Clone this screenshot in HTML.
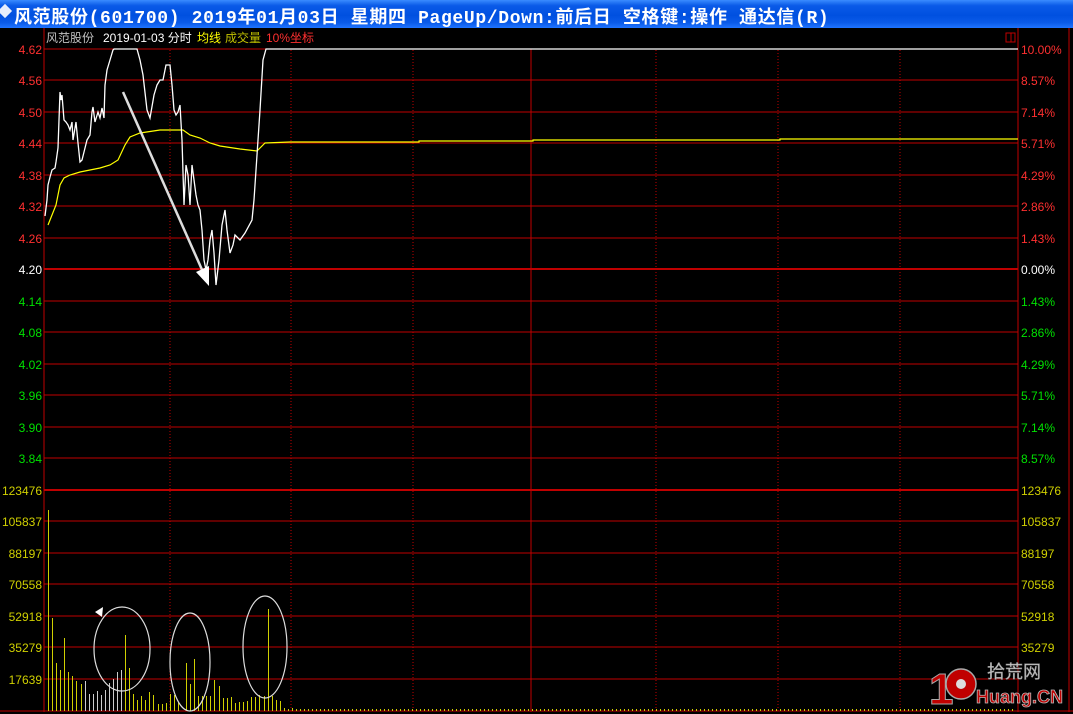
<!DOCTYPE html>
<html><head><meta charset="utf-8"><style>
html,body{margin:0;padding:0;background:#000;width:1073px;height:714px;overflow:hidden}
#t{position:absolute;left:0;top:0;width:1073px;height:28px;background:linear-gradient(#3a8cff 0,#0a5ae8 20%,#0050e0 55%,#0a5ae8 80%,#1f74ff 100%);}
#t span{position:absolute;left:14px;top:3px;color:#fff;font:bold 18px "Liberation Mono","Noto Sans CJK SC",monospace;white-space:nowrap;letter-spacing:0.65px}
svg{position:absolute;left:0;top:0}
text{font-family:"Liberation Sans","Noto Sans CJK SC",sans-serif;font-size:12px}
.g line{shape-rendering:crispEdges}
</style></head><body>
<div id="t"><span>风范股份(601700) 2019年01月03日 星期四 PageUp/Down:前后日 空格键:操作 通达信(R)</span></div>
<svg width="1073" height="714" id="s">
<rect x="0" y="6" width="10" height="10" fill="#fff" transform="rotate(45 5 11)" opacity="0.9"/>
<g class="g" stroke="#c00000" stroke-width="1">
<line x1="44" y1="28" x2="44" y2="712"/>
<line x1="1018" y1="28" x2="1018" y2="712"/>
<line x1="1069" y1="28" x2="1069" y2="712"/>
<line x1="531" y1="49" x2="531" y2="712"/>
<g stroke-dasharray="1,2">
<line x1="170" y1="50" x2="170" y2="712"/><line x1="291" y1="50" x2="291" y2="712"/><line x1="413" y1="50" x2="413" y2="712"/><line x1="656" y1="50" x2="656" y2="712"/><line x1="778" y1="50" x2="778" y2="712"/><line x1="900" y1="50" x2="900" y2="712"/>
</g>
<line x1="44" y1="49" x2="1018" y2="49"/><line x1="44" y1="80" x2="1018" y2="80"/><line x1="44" y1="112" x2="1018" y2="112"/><line x1="44" y1="143" x2="1018" y2="143"/><line x1="44" y1="175" x2="1018" y2="175"/><line x1="44" y1="206" x2="1018" y2="206"/><line x1="44" y1="238" x2="1018" y2="238"/>
<line x1="44" y1="269" x2="1018" y2="269" stroke-width="2"/>
<line x1="44" y1="301" x2="1018" y2="301"/><line x1="44" y1="332" x2="1018" y2="332"/><line x1="44" y1="364" x2="1018" y2="364"/><line x1="44" y1="395" x2="1018" y2="395"/><line x1="44" y1="427" x2="1018" y2="427"/><line x1="44" y1="458" x2="1018" y2="458"/>
<line x1="44" y1="490" x2="1018" y2="490" stroke-width="2"/>
<line x1="44" y1="521" x2="1018" y2="521"/><line x1="44" y1="553" x2="1018" y2="553"/><line x1="44" y1="584" x2="1018" y2="584"/><line x1="44" y1="616" x2="1018" y2="616"/><line x1="44" y1="647" x2="1018" y2="647"/><line x1="44" y1="679" x2="1018" y2="679"/>
<line x1="0" y1="711" x2="1073" y2="711"/>
</g>
<rect x="1006" y="33" width="9" height="9" fill="none" stroke="#c00000"/><line x1="1011" y1="33" x2="1011" y2="42" stroke="#c00000"/>
<text x="46" y="42" fill="#c0c0c0">风范股份</text>
<text x="103" y="42" fill="#fff">2019-01-03 分时</text>
<text x="197" y="42" fill="#ffff00">均线</text>
<text x="225" y="42" fill="#c0c000">成交量</text>
<text x="266" y="42" fill="#ff3030">10%坐标</text>
<g text-anchor="end">
<text x="42" y="54" fill="#ff3030">4.62</text><text x="42" y="85" fill="#ff3030">4.56</text><text x="42" y="117" fill="#ff3030">4.50</text><text x="42" y="148" fill="#ff3030">4.44</text><text x="42" y="180" fill="#ff3030">4.38</text><text x="42" y="211" fill="#ff3030">4.32</text><text x="42" y="243" fill="#ff3030">4.26</text>
<text x="42" y="274" fill="#fff">4.20</text>
<text x="42" y="306" fill="#00e000">4.14</text><text x="42" y="337" fill="#00e000">4.08</text><text x="42" y="369" fill="#00e000">4.02</text><text x="42" y="400" fill="#00e000">3.96</text><text x="42" y="432" fill="#00e000">3.90</text><text x="42" y="463" fill="#00e000">3.84</text>
<g fill="#d0d000"><text x="42" y="495">123476</text><text x="42" y="526">105837</text><text x="42" y="558">88197</text><text x="42" y="589">70558</text><text x="42" y="621">52918</text><text x="42" y="652">35279</text><text x="42" y="684">17639</text></g>
</g>
<g>
<text x="1021" y="54" fill="#ff3030">10.00%</text><text x="1021" y="85" fill="#ff3030">8.57%</text><text x="1021" y="117" fill="#ff3030">7.14%</text><text x="1021" y="148" fill="#ff3030">5.71%</text><text x="1021" y="180" fill="#ff3030">4.29%</text><text x="1021" y="211" fill="#ff3030">2.86%</text><text x="1021" y="243" fill="#ff3030">1.43%</text>
<text x="1021" y="274" fill="#fff">0.00%</text>
<text x="1021" y="306" fill="#00e000">1.43%</text><text x="1021" y="337" fill="#00e000">2.86%</text><text x="1021" y="369" fill="#00e000">4.29%</text><text x="1021" y="400" fill="#00e000">5.71%</text><text x="1021" y="432" fill="#00e000">7.14%</text><text x="1021" y="463" fill="#00e000">8.57%</text>
<g fill="#d0d000"><text x="1021" y="495">123476</text><text x="1021" y="526">105837</text><text x="1021" y="558">88197</text><text x="1021" y="589">70558</text><text x="1021" y="621">52918</text><text x="1021" y="652">35279</text></g>
</g>
<polyline fill="none" stroke="#ffff00" stroke-width="1.2" points="48,225 52,215 56,205 60,185 64,178 70,175 80,172 100,168 110,165 118,160 125,145 130,137 140,133 160,130 170,130 183,130 190,135 200,138 210,143 220,146 240,149 257,151 265,143 290,142 419,142 419,141 533,141 533,140 780,140 780,139 1018,139"/>
<polyline fill="none" stroke="#fff" stroke-width="1.3" points="45,216 47,200 48,185 50,177 52,170 55,168 56,162 58,148 60,92 61,100 62,95 64,120 66,122 68,125 70,130 72,122 73,140 76,122 78,143 80,162 82,160 84,152 87,140 90,135 92,112 93,107 95,122 98,112 100,118 102,108 104,118 105,85 107,70 110,60 113,50 114,49 137,49 140,60 143,75 147,110 150,118 154,95 157,85 160,80 163,80 166,65 170,65 172,85 174,110 176,115 178,112 180,105 182,140 184,205 186,165 188,175 190,205 192,165 194,180 196,195 198,205 200,210 202,230 204,260 206,270 208,260 210,240 212,230 214,253 216,285 219,260 222,225 225,210 227,230 230,253 233,245 235,235 240,240 245,233 252,220 254,200 256,170 258,140 260,110 263,60 266,49 1018,49"/>
<line x1="123" y1="92" x2="203" y2="272" stroke="#ddd" stroke-width="2.5"/>
<polygon points="209,286 196,272 209,266" fill="#fff"/>
<g id="vb" stroke="#d0d000" stroke-width="1"></g>
<g fill="none" stroke="#ddd" stroke-width="1.2">
<ellipse cx="122" cy="649" rx="28" ry="42"/><ellipse cx="190" cy="662" rx="20" ry="49"/><ellipse cx="265" cy="647" rx="22" ry="51"/>
</g>
<polygon points="95,612 103,607 102,617" fill="#fff"/>
<g font-family="Liberation Sans,sans-serif">
<text x="929" y="704" font-weight="bold" fill="#c00000" stroke="#aaa" stroke-width="1" style="font-size:44px">1</text>
<circle cx="961" cy="684" r="15" fill="#c00000" stroke="#aaa" stroke-width="1.5"/><circle cx="961" cy="684" r="5" fill="#ddd"/>
<text x="987" y="678" fill="#c8c8c8" stroke="#888" stroke-width="0.5" style="font-size:18px">拾荒网</text>
<text x="976" y="703" font-weight="bold" fill="#c00000" stroke="#bbb" stroke-width="0.8" style="font-size:18px">Huang.CN</text>
</g>
</svg>
<script>
var d=[[48,510],[52,618],[56,663],[60,670],[64,638],[68,672],[72,676],[76,681],[81,684],[85,681],[89,694],[93,694],[97,691],[101,695],[105,690],[109,683],[113,679],[117,672],[121,670],[125,635],[129,668],[133,694],[137,700],[141,696],[145,700],[149,692],[153,695],[158,704],[162,704],[166,703],[170,694],[174,695],[178,702],[186,663],[190,684],[194,659],[198,696],[202,696],[206,696],[210,696],[214,680],[219,686],[223,698],[227,698],[231,697],[235,703],[239,702],[243,702],[247,701],[251,697],[255,697],[259,695],[264,696],[268,609],[272,696],[276,700],[280,701],[284,708],[288,709],[292,708],[296,709]];
for(var x=300;x<1016;x+=4){var h=709;if(x==478)h=705;if(x==534)h=704;d.push([x,h]);}
var g=document.getElementById('vb'),s='';
d.forEach(function(p){var c=(p[0]>=85&&p[0]<=121&&p[0]%2)?'#ccc':'#d0d000';s+='<line x1="'+(p[0]+.5)+'" y1="'+p[1]+'" x2="'+(p[0]+.5)+'" y2="711" stroke="'+c+'"/>';});
g.innerHTML=s;
</script>
</body></html>
